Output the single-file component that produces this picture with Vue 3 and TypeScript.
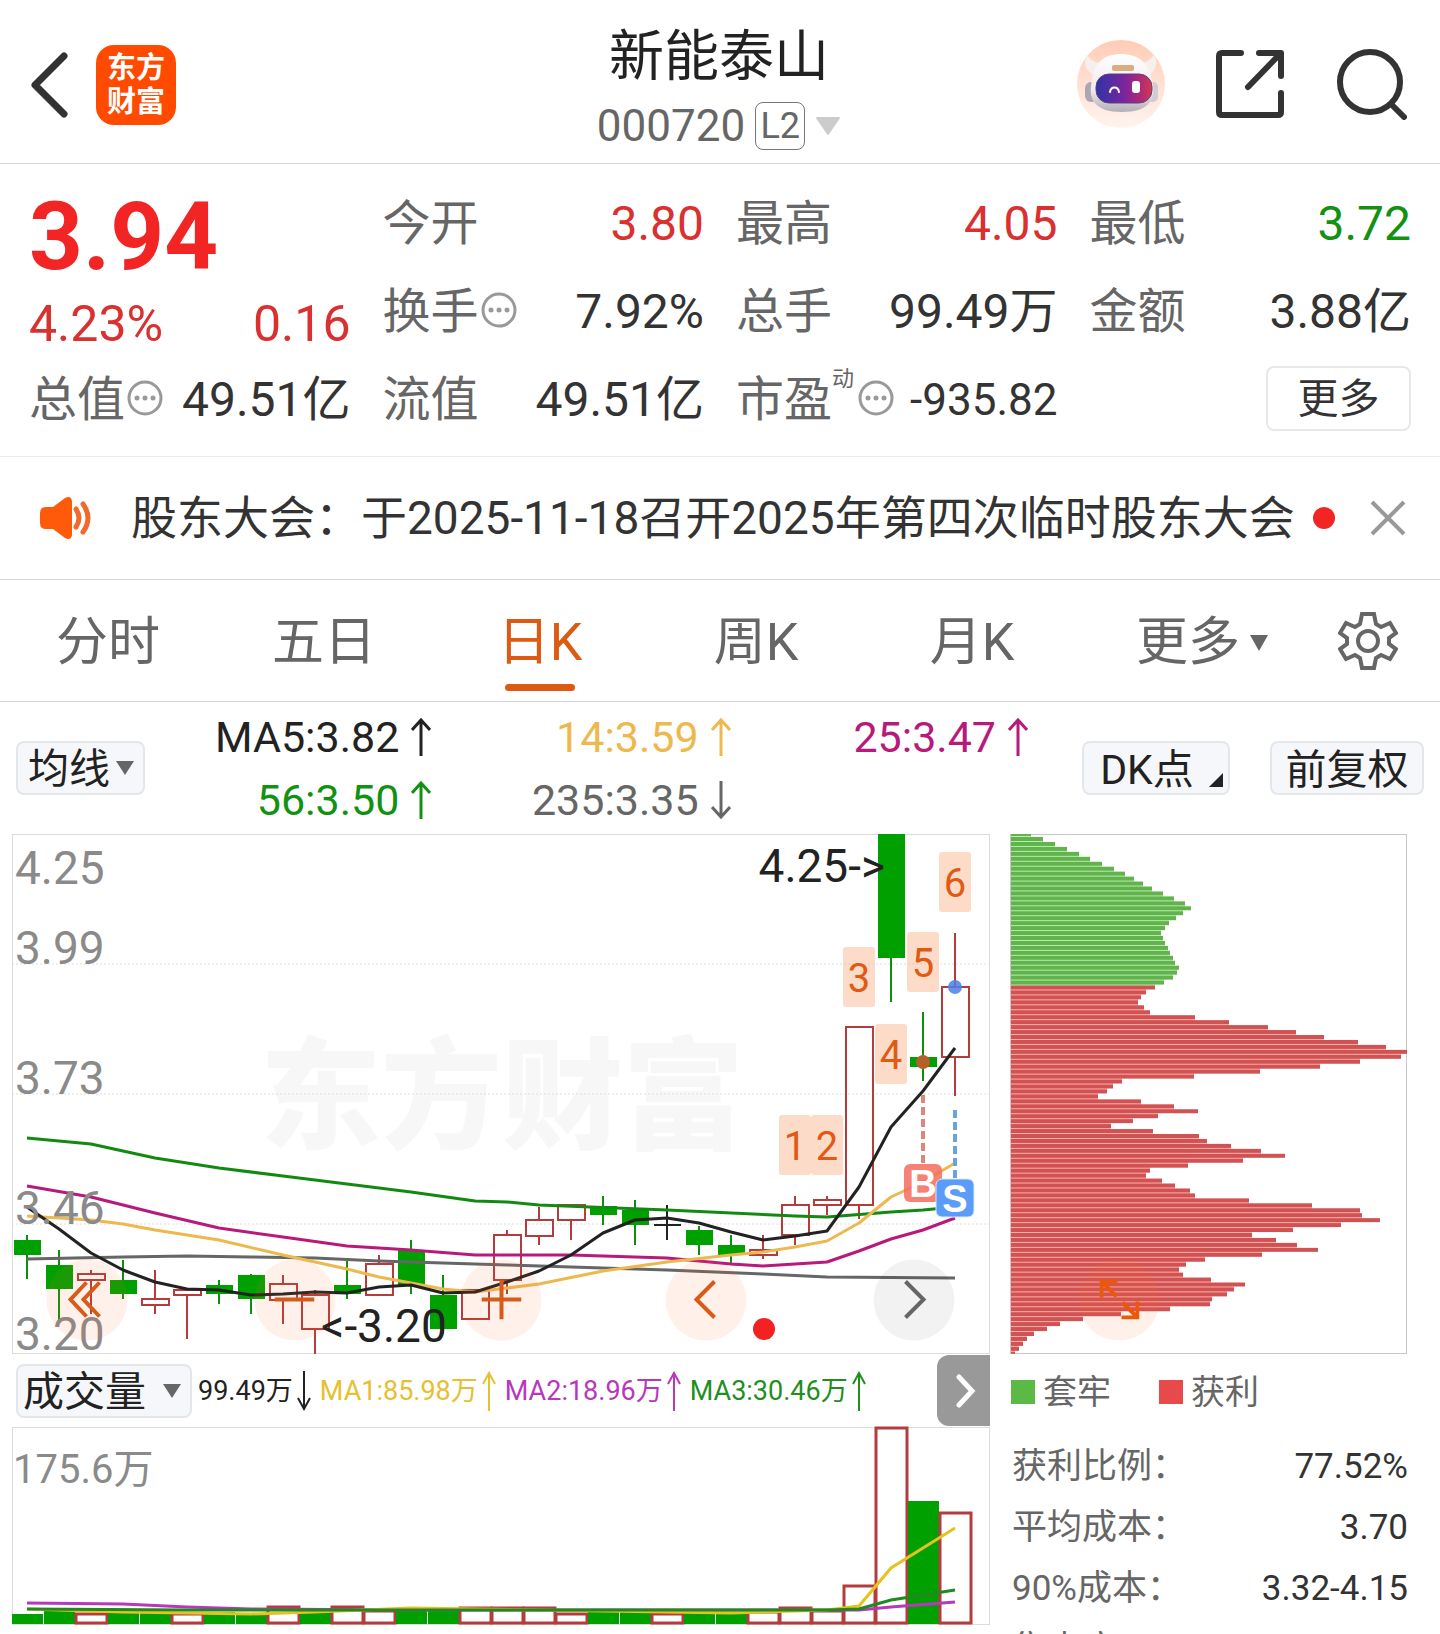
<script setup lang="ts">
import { ref } from 'vue'

type Kind = 'up' | 'down' | 'flat'
interface Candle { kind: Kind; high: number; top: number; bottom: number; low: number }

const STEP = 32
const cx = (i: number): number => 15 + i * STEP

const rawCandles: [Kind, number, number, number, number][] = [
  ['down', 401, 406, 421, 445], ['down', 416, 431, 455, 489], ['up', 436, 440, 446, 480],
  ['down', 426, 446, 460, 465], ['up', 436, 465, 471, 480], ['up', 455, 456, 461, 505],
  ['down', 446, 451, 460, 470], ['down', 440, 441, 465, 480], ['up', 441, 450, 466, 490],
  ['up', 456, 461, 495, 520], ['down', 427, 451, 460, 465], ['up', 421, 430, 461, 461],
  ['down', 406, 416, 451, 460], ['down', 441, 461, 495, 500], ['up', 455, 456, 485, 485],
  ['up', 396, 401, 446, 460], ['up', 373, 386, 402, 411], ['up', 371, 371, 386, 406],
  ['down', 362, 372, 381, 391], ['down', 366, 376, 391, 411], ['flat', 371, 391, 391, 406],
  ['down', 392, 396, 411, 421], ['down', 401, 411, 421, 429], ['up', 401, 416, 421, 425],
  ['up', 362, 371, 401, 411], ['up', 362, 366, 371, 381], ['up', 193, 193, 371, 385],
  ['down', 0, 0, 124, 168], ['down', 178, 223, 233, 247], ['up', 99, 153, 223, 262],
]
const candles: Candle[] = rawCandles.map(([kind, high, top, bottom, low]) => ({ kind, high, top, bottom, low }))

const toPoints = (pts: [number, number][]): string => pts.map(([i, y]) => `${cx(i)},${y}`).join(' ')

const averages = [
  { color: '#666666', points: toPoints([[0, 425], [3, 423], [5, 422], [7, 423], [9, 424], [11, 427], [13, 429], [15, 431], [18, 434], [20, 436], [23, 440], [25, 443], [29, 444]]) },
  { color: '#128a12', points: toPoints([[0, 304], [2, 310], [4, 324], [6, 334], [8, 342], [10, 350], [12, 358], [14, 367], [15, 368], [16, 371], [20, 376], [24, 382], [25, 383], [27, 378], [28, 376], [29, 373]]) },
  { color: '#b81a7c', points: toPoints([[0, 352], [2, 363], [4, 379], [6, 394], [8, 403], [10, 412], [12, 416], [14, 421], [17, 421], [20, 424], [22, 430], [23, 432], [25, 428], [26, 417], [27, 405], [28, 396], [29, 384]]) },
  { color: '#edb94f', points: toPoints([[0, 382], [2, 386], [3, 390], [4, 396], [6, 406], [8, 421], [10, 435], [11, 443], [12, 449], [13, 455], [14, 458], [15, 454], [16, 450], [18, 437], [20, 428], [22, 421], [23, 418], [24, 413], [25, 407], [26, 389], [27, 363], [28, 348], [29, 329]]) },
  { color: '#222222', points: toPoints([[0, 373], [1, 395], [2, 419], [3, 436], [4, 448], [5, 455], [6, 456], [7, 461], [8, 460], [9, 458], [10, 459], [11, 453], [12, 451], [13, 459], [14, 458], [15, 448], [16, 437], [17, 421], [18, 399], [19, 386], [20, 384], [21, 389], [22, 398], [23, 406], [24, 402], [25, 397], [26, 353], [27, 293], [28, 257], [29, 214]]) },
]

const scale = [
  { label: '4.25', y: 50 },
  { label: '3.99', y: 130 },
  { label: '3.73', y: 260 },
  { label: '3.46', y: 390 },
  { label: '3.20', y: 516 },
]

const marks = [
  { n: 1, i: 24, y: 281 },
  { n: 2, i: 25, y: 281 },
  { n: 3, i: 26, y: 113 },
  { n: 4, i: 27, y: 190 },
  { n: 5, i: 28, y: 98 },
  { n: 6, i: 29, y: 18 },
]

// Upper edge of every volume bar; a positive flag marks a rising day.
const volumes: [0 | 1, number][] = [
  [0, 187], [0, 184], [1, 187], [0, 185], [0, 185], [1, 187], [0, 185], [0, 188], [1, 180], [0, 184],
  [1, 180], [1, 184], [0, 184], [0, 184], [1, 181], [1, 181], [1, 181], [1, 187], [0, 185], [0, 185],
  [1, 187], [0, 185], [0, 185], [1, 185], [1, 181], [1, 184], [1, 159], [1, 1], [0, 74], [1, 86],
]
const volumeLines = [
  { color: '#b838bb', points: toPoints([[0, 176], [3, 177], [5, 180], [7, 182], [12, 183], [26, 183], [27, 180], [29, 175]]) },
  { color: '#e6c21e', points: toPoints([[0, 182], [3, 185], [7, 187], [9, 185], [12, 181], [14, 182], [18, 184], [22, 186], [25, 183], [26, 179], [27, 141], [28, 121], [29, 101]]) },
  { color: '#1f8a1f', points: toPoints([[0, 182], [5, 183], [25, 183], [26, 182], [27, 173], [28, 168], [29, 163]]) },
]

// Share of holders at each price level, top price first.
const chips: number[] = [
  20, 32, 44, 56, 68, 79, 91, 103, 114, 123, 132, 141, 152, 163, 174, 180, 172, 165, 158, 154, 150, 152, 154, 157, 159, 162, 164, 168, 166, 162, 153,
  144, 135, 130, 127, 133, 139, 184, 218, 257, 285, 313, 347, 375, 396, 390, 349, 309, 249, 183, 111, 102, 96, 87,
  130, 163, 187, 147, 122, 100, 142, 188, 196, 220, 250, 274, 232, 177, 139, 135, 151, 164, 179, 184, 238, 301, 349, 351, 369, 330, 282, 241, 265, 286, 307, 251, 194, 175, 168, 172, 200, 234, 223, 216, 201, 199, 159, 110, 72, 49, 36, 23, 16, 12, 8, 4,
]
const GREEN_LEVELS = 31
const PITCH = 4.95
const chipY = (i: number): number => 5 + (i - 1) * PITCH
const chipBars = chips.map((w, i) => ({
  w,
  y: Math.max(0, chipY(i) - 2),
  h: i === 0 || i === chips.length - 1 ? 2 : 4,
  gap: Math.min(w, chips[i + 1] ?? 0),
  gapY: Math.max(0, chipY(i)),
  trapped: i < GREEN_LEVELS,
}))

const tabs = ['分时', '五日', '日K', '周K', '月K']
const active = ref('日K')

const maItems = [
  { text: 'MA5:3.82', up: true, color: '#222222' },
  { text: '14:3.59', up: true, color: '#edb94f' },
  { text: '25:3.47', up: true, color: '#b81a7c' },
  { text: '56:3.50', up: true, color: '#129112' },
  { text: '235:3.35', up: false, color: '#666666' },
]
const volItems = [
  { text: '99.49万', up: false, color: '#222222' },
  { text: 'MA1:85.98万', up: true, color: '#e6c030' },
  { text: 'MA2:18.96万', up: true, color: '#b838bb' },
  { text: 'MA3:30.46万', up: true, color: '#1f8f1f' },
]
const costs = [
  { k: '获利比例：', v: '77.52%' },
  { k: '平均成本：', v: '3.70' },
  { k: '90%成本：', v: '3.32-4.15' },
  { k: '集中度：', v: '' },
]
</script>

<template>
  <div class="page">
    <header class="top">
      <div class="top-left">
        <button class="icon-btn" aria-label="返回">
          <svg width="38" height="66" viewBox="0 0 38 66"><path d="M33 4 4 33l29 29" fill="none" stroke="#333" stroke-width="7" stroke-linecap="round" stroke-linejoin="round" /></svg>
        </button>
        <a class="logo" href="#">东方<br />财富</a>
      </div>
      <div class="title">
        <h1>新能泰山</h1>
        <div class="code">
          <span>000720</span>
          <span class="level">L2</span>
          <svg width="26" height="20" viewBox="0 0 26 20"><path d="M2 2h22L13 18z" fill="#ccc" stroke="#ccc" stroke-width="2" stroke-linejoin="round" /></svg>
        </div>
      </div>
      <div class="top-right">
        <button class="icon-btn" aria-label="智能助手">
          <svg width="88" height="88" viewBox="0 0 88 88">
            <defs>
              <linearGradient id="halo" x1="0" y1="0" x2="0" y2="1"><stop offset="0" stop-color="#ffccb6" /><stop offset="1" stop-color="#fff4ee" /></linearGradient>
              <linearGradient id="visor" x1="0" y1="0" x2="1" y2="0"><stop offset="0" stop-color="#2e35a8" /><stop offset="0.5" stop-color="#7a249c" /><stop offset="0.8" stop-color="#b02a78" /><stop offset="1" stop-color="#d23a4c" /></linearGradient>
              <linearGradient id="shell" x1="0" y1="0" x2="0" y2="1"><stop offset="0" stop-color="#ffffff" /><stop offset="0.6" stop-color="#efebee" /><stop offset="1" stop-color="#b4b0b8" /></linearGradient>
            </defs>
            <circle cx="44" cy="44" r="44" fill="url(#halo)" />
            <path d="M18 36C8 31 6 22 10 14c2 5 7 8 14 10zM70 36c10-5 11-14 7-22-2 5-7 8-14 10z" fill="#f7efee" />
            <rect x="8" y="42" width="13" height="20" rx="6" fill="#aaa6b2" />
            <rect x="69" y="42" width="12" height="20" rx="5" fill="#d0ccd4" />
            <path d="M44 14c17 0 28 9 31 26 2 9 2 16-2 22-5 7-15 10-28 10s-23-3-28-10c-4-6-4-13-2-22 2-17 12-26 29-26z" fill="url(#shell)" />
            <rect x="35" y="25" width="22" height="6" rx="2" fill="#deaa80" />
            <rect x="19" y="34" width="56" height="29" rx="13" fill="url(#visor)" stroke="#60407a" stroke-width="1" />
            <path d="M33 52c1-6 8-6 9 0" fill="none" stroke="#fff" stroke-width="2" stroke-linecap="round" />
            <rect x="55" y="41" width="8" height="12" rx="3" fill="#fff" />
          </svg>
        </button>
        <button class="icon-btn" aria-label="分享">
          <svg width="70" height="70" viewBox="0 0 70 70" fill="none" stroke="#333" stroke-width="6" stroke-linecap="round" stroke-linejoin="round"><path d="M26 4H7q-3 0-3 3v56q0 3 3 3h56q3 0 3-3V44M44 4h22v23M65 5 33 38" /></svg>
        </button>
        <button class="icon-btn" aria-label="搜索">
          <svg width="72" height="72" viewBox="0 0 72 72" fill="none" stroke="#333" stroke-width="6" stroke-linecap="round"><circle cx="35" cy="34" r="30" /><path d="m57 57 12 12" /></svg>
        </button>
      </div>
    </header>

    <section class="quote">
      <div class="price">
        <strong>3.94</strong>
        <div class="change"><span>4.23%</span><span>0.16</span></div>
      </div>
      <div class="cell"><span class="k">今开</span><span class="v rise">3.80</span></div>
      <div class="cell"><span class="k">最高</span><span class="v rise">4.05</span></div>
      <div class="cell"><span class="k">最低</span><span class="v fall">3.72</span></div>
      <div class="cell">
        <span class="k">换手<svg class="dots" viewBox="0 0 36 36"><use href="#more-dots" /></svg></span><span class="v">7.92%</span>
      </div>
      <div class="cell"><span class="k">总手</span><span class="v">99.49万</span></div>
      <div class="cell"><span class="k">金额</span><span class="v">3.88亿</span></div>
      <div class="cell">
        <span class="k">总值<svg class="dots" viewBox="0 0 36 36"><g id="more-dots"><circle cx="18" cy="18" r="16" fill="none" stroke="#999" stroke-width="3" /><circle cx="10" cy="18" r="2.5" fill="#999" /><circle cx="18" cy="18" r="2.5" fill="#999" /><circle cx="26" cy="18" r="2.5" fill="#999" /></g></svg></span><span class="v">49.51亿</span>
      </div>
      <div class="cell"><span class="k">流值</span><span class="v">49.51亿</span></div>
      <div class="cell">
        <span class="k">市盈<small>动</small><svg class="dots" viewBox="0 0 36 36"><use href="#more-dots" /></svg></span><span class="v tight">-935.82</span>
      </div>
      <div class="cell end"><button class="more">更多</button></div>
    </section>

    <section class="notice">
      <svg class="horn" width="52" height="44" viewBox="0 0 52 44">
        <path d="M6 11h7L25 2q6-3 7 3v34q-1 6-7 3l-12-9H6q-6 0-6-6V17q0-6 6-6z" fill="#ff5a0a" />
        <path d="M36 13q6 9 0 18M43 8q10 14 0 28" fill="none" stroke="#f2692c" stroke-width="5" stroke-linecap="round" />
      </svg>
      <a class="notice-text" href="#">股东大会：于2025-11-18召开2025年第四次临时股东大会</a>
      <i class="dot"></i>
      <button class="icon-btn close" aria-label="关闭">
        <svg width="36" height="36" viewBox="0 0 36 36"><path d="m2 2 32 32M34 2 2 34" stroke="#999" stroke-width="4" /></svg>
      </button>
    </section>

    <nav class="tabs">
      <button v-for="t in tabs" :key="t" class="tab" :class="{ on: t === active }" @click="active = t">{{ t }}</button>
      <button class="tab tab-more">更多<i class="tri"></i></button>
      <button class="tab gear" aria-label="设置">
        <svg width="60" height="60" viewBox="0 0 60 60" fill="none" stroke="#666" stroke-width="4"><path d="M24 3h12l2 10 5 3 9-4 6 10-7 5v6l7 5-6 10-9-4-5 3-2 10H24l-2-10-5-3-9 4-6-10 7-5v-6l-7-5 6-10 9 4 5-3z" /><circle cx="30" cy="30" r="10" /></svg>
      </button>
    </nav>

    <section class="tools">
      <div class="select ma-select"><select aria-label="主图指标"><option>均线</option></select></div>
      <div class="ma-grid">
        <span v-for="m in maItems" :key="m.text" :style="{ color: m.color }">{{ m.text }}<svg width="20" height="38" viewBox="0 0 20 38" fill="none" stroke="currentColor" stroke-width="3"><path :d="m.up ? 'M10 38V2M1 12l9-10 9 10' : 'M10 0v36M1 26l9 10 9-10'" /></svg></span>
      </div>
      <button class="chip dk">DK点</button>
      <button class="chip">前复权</button>
    </section>

    <main class="board">
      <div class="left">
        <div class="kline">
          <svg class="plot" viewBox="0 0 978 520">
            <rect x="0.5" y="0.5" width="977" height="519" fill="#fff" stroke="#dcdcdc" />
            <text x="248" y="305" class="wm">东方财富</text>
            <line v-for="y in [130, 260, 390]" :key="y" x1="0" x2="977" :y1="y" :y2="y" stroke="#dedede" stroke-dasharray="2 2" />
            <g v-for="(c, i) in candles" :key="i">
              <template v-if="c.kind === 'up'">
                <path :d="`M${cx(i)} ${c.high}V${c.top}M${cx(i)} ${c.bottom}V${c.low}`" stroke="#b43c3c" stroke-width="2" />
                <rect :x="cx(i) - 13" :y="c.top" width="27" :height="c.bottom - c.top" fill="none" stroke="#b43c3c" stroke-width="2" />
              </template>
              <template v-else-if="c.kind === 'down'">
                <line :x1="cx(i)" :x2="cx(i)" :y1="c.high" :y2="c.low" stroke="#0c8f0c" stroke-width="2" />
                <rect :x="cx(i) - 13" :y="c.top" width="27" :height="c.bottom - c.top" fill="#00a000" />
              </template>
              <path v-else :d="`M${cx(i)} ${c.high}V${c.low}M${cx(i) - 13} ${c.top}h27`" stroke="#222" stroke-width="2" />
            </g>
            <polyline v-for="a in averages" :key="a.color" :points="a.points" fill="none" :stroke="a.color" stroke-width="3" stroke-linejoin="round" />
            <text v-for="s in scale" :key="s.label" x="3" :y="s.y" class="axis">{{ s.label }}</text>
            <text x="873" y="48" class="peak" text-anchor="end">4.25-&gt;</text>
            <text x="309" y="508" class="peak">&lt;-3.20</text>
            <g v-for="m in marks" :key="m.n">
              <rect :x="cx(m.i) - 16" :y="m.y" width="32" height="60" rx="3" fill="#fcb894" fill-opacity="0.5" />
              <text :x="cx(m.i)" :y="m.y + 45" text-anchor="middle" class="mark">{{ m.n }}</text>
            </g>
            <circle cx="911" cy="228" r="7" fill="#b4602a" />
            <circle cx="943" cy="153" r="7" fill="#4a80e8" fill-opacity="0.85" />
            <line x1="911" x2="911" y1="261" y2="329" stroke="#d9897c" stroke-width="4" stroke-dasharray="8 4" />
            <line x1="943" x2="943" y1="276" y2="344" stroke="#6aa2dc" stroke-width="4" stroke-dasharray="8 4" />
            <rect x="892" y="330" width="38" height="38" rx="6" fill="#f56c5c" fill-opacity="0.85" />
            <text x="911" y="363" text-anchor="middle" class="flag">B</text>
            <rect x="924" y="345" width="38" height="38" rx="6" fill="#5b9cf8" stroke="#d8e8ff" />
            <text x="943" y="378" text-anchor="middle" class="flag">S</text>
            <circle cx="752" cy="495" r="11" fill="#f22222" />
          </svg>
          <button class="pan p1" aria-label="最早"><svg viewBox="0 0 40 40"><path d="M19 3 3 20l16 17M32 3 16 20l16 17" /></svg></button>
          <button class="pan p2" aria-label="缩小"><svg viewBox="0 0 40 40"><path d="M0 20h40" /></svg></button>
          <button class="pan p3" aria-label="放大"><svg viewBox="0 0 40 40"><path d="M0 20h40M20 0v40" /></svg></button>
          <button class="pan p4" aria-label="向左"><svg viewBox="0 0 40 40"><path d="M28 2 10 20l18 18" /></svg></button>
          <button class="pan p5" aria-label="向右"><svg viewBox="0 0 40 40"><path d="m12 2 18 18-18 18" /></svg></button>
        </div>
        <div class="vol-bar">
          <div class="select vol-select"><select aria-label="副图指标"><option>成交量</option></select></div>
          <span v-for="m in volItems" :key="m.text" class="vol-item" :style="{ color: m.color }">{{ m.text }}<svg width="14" height="40" viewBox="0 0 14 40" fill="none" stroke="currentColor" stroke-width="2"><path :d="m.up ? 'M7 40V2M1 13 7 2l6 11' : 'M7 0v38M1 27l6 11 6-11'" /></svg></span>
          <button class="next" aria-label="下一个"><svg width="20" height="34" viewBox="0 0 20 34"><path d="m3 3 13 14L3 31" fill="none" stroke="#fff" stroke-width="5" stroke-linecap="round" /></svg></button>
        </div>
        <svg class="plot" viewBox="0 0 978 198">
          <rect x="0.5" y="0.5" width="977" height="197" fill="#fff" stroke="#dcdcdc" />
          <text x="1" y="56" class="axis small">175.6万</text>
          <template v-for="(v, i) in volumes" :key="i">
            <rect v-if="v[0]" :x="i * STEP" :y="v[1]" width="31" :height="196 - v[1]" fill="#fff" stroke="#b43c3c" stroke-width="3" />
            <rect v-else :x="i * STEP" :y="v[1]" width="31" :height="197 - v[1]" fill="#00a000" />
          </template>
          <polyline v-for="l in volumeLines" :key="l.color" :points="l.points" fill="none" :stroke="l.color" stroke-width="3" />
        </svg>
      </div>

      <aside class="right">
        <div class="chips">
          <svg class="plot" viewBox="0 0 398 520">
            <rect x="0.5" y="0.5" width="396" height="519" fill="#fff" stroke="#c8c8c8" />
            <template v-for="(b, i) in chipBars" :key="i">
              <rect x="1" :y="b.gapY" :width="b.gap" height="5" :fill="b.trapped ? '#b8f2ac' : '#ffb4b0'" />
            </template>
            <rect v-for="(b, i) in chipBars" :key="'b' + i" x="1" :y="b.y" :width="b.w" :height="b.h" :fill="b.trapped ? '#62b24e' : '#d15252'" />
          </svg>
          <button class="pan expand" aria-label="展开"><svg viewBox="0 0 40 40"><path d="M2 18V2h16M3 3l14 14M38 22v16H22M37 37 23 23" /></svg></button>
        </div>
        <div class="legend">
          <span><i class="sq trapped"></i>套牢</span>
          <span><i class="sq profit"></i>获利</span>
        </div>
        <dl class="costs">
          <div v-for="c in costs" :key="c.k"><dt>{{ c.k }}</dt><dd>{{ c.v }}</dd></div>
        </dl>
      </aside>
    </main>
  </div>
</template>

<style>
body { margin: 0; background: #fff; }
</style>

<style scoped>
.page { height: 100vh; overflow: hidden; background: #fff; color: #333; font-family: Roboto, "Noto Sans CJK SC", sans-serif; }
.page *, .page *::after { box-sizing: border-box; }
button, select { font: inherit; color: inherit; border: 0; background: none; padding: 0; margin: 0; cursor: pointer; }
a { color: inherit; text-decoration: none; }
svg { display: block; flex: none; }
.icon-btn { display: flex; }

.top { display: grid; grid-template-columns: 1fr auto 1fr; height: 164px; padding: 0 33px 0 31px; border-bottom: 1px solid #d6d6d6; }
.top-left { display: flex; align-items: center; gap: 27px; padding-top: 6px; }
.logo { display: block; width: 80px; height: 80px; padding-top: 6px; border-radius: 18px; background: #ff4a00; color: #fff; font-size: 29px; line-height: 34px; font-weight: 700; text-align: center; }
.title { display: flex; flex-direction: column; align-items: center; padding-top: 23px; }
h1 { margin: 0; font-size: 55px; line-height: 66px; font-weight: 400; color: #222; }
.code { display: flex; align-items: center; gap: 10px; height: 73px; font-size: 44px; line-height: 48px; color: #666; }
.level { width: 50px; border: 1px solid #777; border-radius: 8px; font-size: 36px; line-height: 46px; text-align: center; }
.top-right { display: flex; align-items: center; justify-content: flex-end; gap: 50px; padding-top: 5px; }

.quote { display: grid; grid-template-columns: repeat(4, 1fr); grid-auto-rows: 88px; column-gap: 32px; padding: 14px 29px; border-bottom: 1px solid #ebebeb; font-size: 48px; line-height: 60px; }
.price { grid-row: span 2; display: flex; flex-direction: column; gap: 8px; padding-top: 12px; }
.price strong { font-size: 94px; line-height: 94px; font-weight: 700; color: #f22424; }
.change { display: flex; justify-content: space-between; font-size: 50px; line-height: 64px; color: #d93030; }
.cell { display: flex; align-items: center; justify-content: space-between; line-height: 56px; white-space: nowrap; }
.k, .v { padding-top: 4px; }
.k { display: flex; align-items: center; color: #666; }
.k small { align-self: flex-start; font-size: 22px; line-height: 14px; margin-right: 2px; }
.dots { width: 36px; height: 36px; margin: 0 0 4px 2px; }
.rise { color: #d93030; }
.fall { color: #129112; }
.tight { font-size: 44px; }
.end { justify-content: flex-end; }
.more { width: 145px; height: 65px; padding-top: 2px; border: 2px solid #e8e8e8; border-radius: 8px; font-size: 41px; line-height: 58px; }

.notice { display: flex; align-items: center; height: 123px; padding: 0 34px 0 40px; border-bottom: 1px solid #d6d6d6; font-size: 46px; }
.notice-text { margin-left: 39px; white-space: nowrap; line-height: 64px; }
.dot { width: 22px; height: 22px; margin-left: 18px; border-radius: 50%; background: #f22424; }
.close { margin-left: auto; }

.tabs { display: grid; grid-template-columns: repeat(6, 3fr) 2fr; height: 122px; border-bottom: 1px solid #d6d6d6; }
.tab { position: relative; display: flex; align-items: center; justify-content: center; padding-top: 4px; font-size: 52px; line-height: 60px; color: #666; }
.gear { padding-top: 0; }
.tab.on { color: #dd5a12; }
.tab.on::after { content: ""; position: absolute; left: 50%; bottom: 10px; width: 70px; height: 7px; margin-left: -35px; border-radius: 4px; background: #dd5a12; }
.tab-more { padding-left: 28px; }
.tri { margin-left: 10px; border: 9px solid transparent; border-top: 16px solid #666; border-bottom: 0; }

.tools { display: flex; align-items: center; height: 132px; padding: 0 16px; }
.select { position: relative; flex: none; border: 2px solid #e4e7ea; border-radius: 8px; background: #f6f7fa; color: #222; }
.select select { display: block; width: 100%; height: 50px; padding: 2px 0 0 10px; appearance: none; font-size: 41px; line-height: 48px; }
.select::after { content: ""; position: absolute; right: 9px; top: 18px; border: 9px solid transparent; border-top: 14px solid #666; border-bottom: 0; pointer-events: none; }
.ma-select { width: 129px; }
.ma-grid { flex: 1; display: grid; grid-template-columns: 271fr 300fr 298fr; margin: 0 54px 0 16px; padding-top: 1px; font-size: 43px; line-height: 63px; }
.ma-grid span { display: flex; align-items: center; justify-content: flex-end; gap: 12px; }
.chip { position: relative; width: 154px; height: 54px; padding-top: 3px; border: 2px solid #e4e7ea; border-radius: 8px; background: #f6f7fa; color: #222; font-size: 41px; line-height: 46px; white-space: nowrap; }
.dk { width: 148px; margin-right: 40px; padding-right: 18px; }
.dk::after { content: ""; position: absolute; right: 5px; bottom: 6px; border-left: 14px solid transparent; border-bottom: 14px solid #222; }

.board { display: grid; grid-template-columns: 978fr 398fr; column-gap: 20px; padding: 0 32px 0 12px; }
.left, .right { min-width: 0; }
.plot { width: 100%; height: auto; overflow: visible; }
.kline, .chips { position: relative; }
.wm { font-size: 121px; font-weight: 900; fill: #f7f7f7; }
.axis { font-size: 46px; fill: #8a8a8a; }
.axis.small { font-size: 40px; }
.peak { font-size: 46px; fill: #222; }
.mark { font-size: 40px; fill: #e05a14; }
.flag { font-family: "Liberation Sans", sans-serif; font-size: 38px; font-weight: 700; fill: #fff; }
.pan { position: absolute; top: 89.6%; width: 81px; height: 81px; border-radius: 50%; background: rgba(255, 110, 50, 0.1); transform: translate(-50%, -50%); }
.pan svg { width: 40px; height: 40px; margin: 0 auto; fill: none; stroke: #d65a1a; stroke-width: 4; }
.p1 { left: 7.7%; }
.p2 { left: 28.9%; }
.p3 { left: 50%; }
.p4 { left: 71%; }
.p5 { left: 92.2%; background: rgba(0, 0, 0, 0.05); }
.p5 svg { stroke: #666; }
.expand { left: 27.4%; }
.expand svg { stroke: #ea580c; }

.vol-bar { display: flex; align-items: center; height: 73px; padding-left: 4px; }
.vol-select { width: 176px; margin-right: 6px; }
.vol-select select { padding-left: 5px; }
.vol-item { display: flex; flex: none; align-items: center; gap: 4px; margin-right: 9px; font-size: 27px; line-height: 40px; white-space: nowrap; }
.next { display: flex; flex: none; align-items: center; justify-content: center; width: 53px; height: 71px; margin-left: auto; padding-left: 4px; border-radius: 12px 0 0 12px; background: #999; }

.legend { display: flex; gap: 48px; height: 76px; padding-left: 1px; font-size: 34px; line-height: 76px; color: #666; }
.legend span { display: flex; align-items: center; gap: 8px; }
.sq { width: 24px; height: 24px; }
.trapped { background: #5cb946; }
.profit { background: #e64a4a; }
.costs { margin: 6px 0 0; padding-left: 2px; font-size: 35px; line-height: 61px; color: #666; }
.costs div { display: flex; justify-content: space-between; white-space: nowrap; }
.costs dd { margin: 0; color: #333; }
</style>
